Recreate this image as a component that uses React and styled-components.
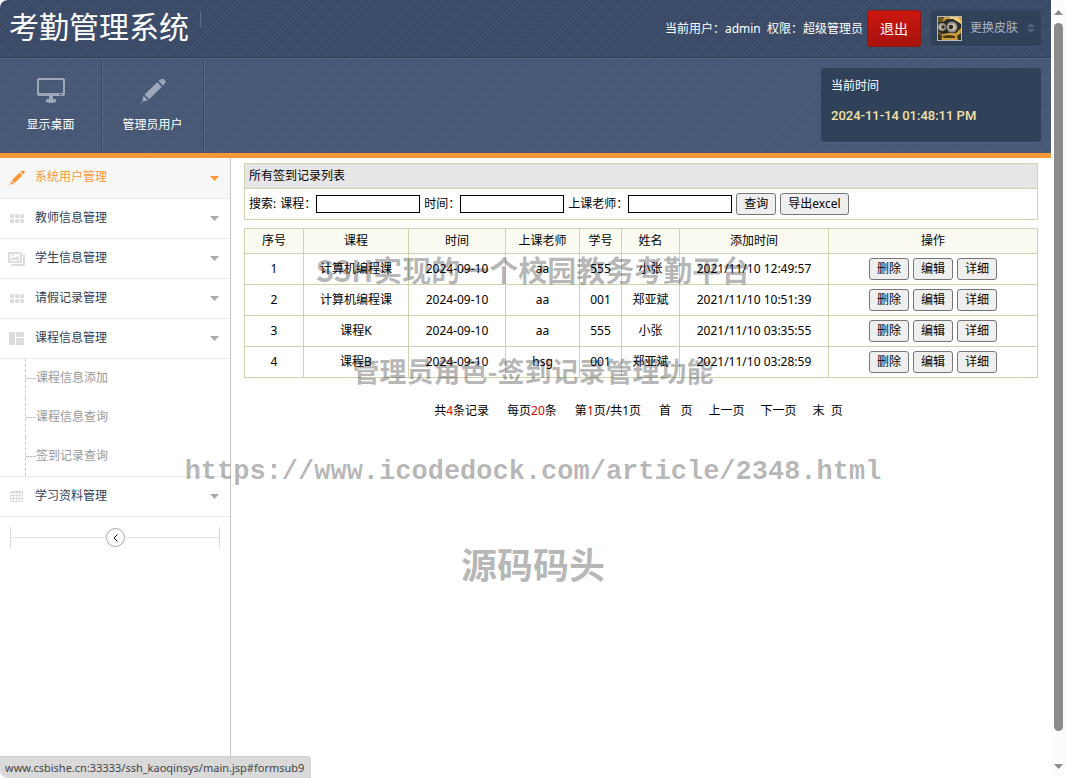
import React from 'react';
import styled, { createGlobalStyle, css } from 'styled-components';

const navy = '#30415a';
const orange = '#f89736';
const line = '#ebebeb';
const olive = '#cdd3ac';

const twill = css`
  background-image: repeating-linear-gradient(
      135deg,
      rgba(255, 255, 255, 0.03) 0 1px,
      transparent 1px 3px
    ),
    repeating-linear-gradient(0deg, rgba(0, 0, 0, 0.04) 0 1px, transparent 1px 2px);
`;

const GlobalStyle = createGlobalStyle`
  * {
    box-sizing: border-box;
  }
  body {
    margin: 0;
    background: #fff;
    color: #000;
    font: 12px/18px 'Noto Sans', 'Noto Sans CJK SC', sans-serif;
  }
  button, input {
    font: inherit;
    color: inherit;
  }
  a {
    color: inherit;
    text-decoration: none;
  }
  svg {
    display: block;
  }
`;

const Page = styled.div`
  position: relative;
  display: grid;
  grid-template-columns: minmax(0, 1fr) 15px;
  min-height: 100vh;
  overflow: hidden;
`;

const Main = styled.div`
  display: flex;
  flex-direction: column;
`;

const TopBar = styled.header`
  display: flex;
  align-items: center;
  height: 58px;
  padding: 0 10px 0 9px;
  border-bottom: 1px solid ${navy};
  border-top-left-radius: 8px;
  background-color: #3b4c69;
  color: #fff;
  ${twill}
`;

const Brand = styled.h1`
  display: flex;
  gap: 11px;
  margin: 0 auto 0 0;
  font-size: 30px;
  font-weight: 400;
  line-height: 52px;
  padding-bottom: 4px;
  &:after {
    content: '';
    width: 1px;
    height: 16px;
    margin-top: 10px;
    background: #5b6c87;
  }
`;

const Logout = styled.button`
  width: 54px;
  height: 37px;
  margin: 0 10px 0 4px;
  padding: 0;
  border: 1px solid #8e1410;
  border-radius: 3px;
  background: linear-gradient(#cb160f, #a8130e);
  font-size: 14px;
`;

const Skin = styled.button`
  display: flex;
  align-items: center;
  width: 110px;
  height: 37px;
  padding: 0 6px;
  border: 0;
  border-bottom: 1px solid #465672;
  border-radius: 3px;
  background: ${navy};
  color: #a9b5c6;
  svg:last-child {
    margin-left: auto;
  }
  span {
    margin-left: 8px;
  }
`;

const Toolbar = styled.div`
  display: flex;
  height: 100px;
  border-top: 1px solid #53647f;
  border-bottom: 5px solid ${orange};
  background-color: #475977;
  color: #fff;
  ${twill}
`;

const Shortcut = styled.a`
  display: flex;
  flex-direction: column;
  align-items: center;
  gap: 12px;
  width: 102px;
  padding-top: 19px;
  border-right: 1px solid #364762;
  box-shadow: 1px 0 #576883;
  svg {
    color: #9ca8ba;
  }
`;

const Clock = styled.div`
  width: 220px;
  height: 75px;
  margin: 9px 10px 0 auto;
  padding: 9px 10px;
  border-bottom: 1px solid #566681;
  border-radius: 3px;
  background: ${navy};
  time {
    display: block;
    margin-top: 12px;
    color: #f5e2a6;
    font: 500 13px/18px Roboto, sans-serif;
  }
`;

const Body = styled.div`
  display: flex;
  flex: 1;
`;

const Sidebar = styled.nav`
  flex: 0 0 231px;
  border-right: 1px solid #c5c5c5;
`;

const MenuItem = styled.a`
  display: flex;
  align-items: center;
  height: ${props => (props.$active ? 41 : 40)}px;
  padding: 0 11px 0 8px;
  border-bottom: 1px solid ${line};
  background: ${props => (props.$active ? '#f7f7f7' : '#fff')};
  color: ${props => (props.$active ? orange : '#30405a')};
  span {
    margin: 0 auto 0 9px;
    padding-bottom: 2px;
  }
  svg:first-child {
    color: ${props => (props.$active ? orange : '#dcdcdc')};
  }
  svg:last-child {
    color: ${props => (props.$active ? orange : '#a9a9a9')};
  }
`;

const SubMenu = styled.div`
  border-bottom: 1px solid ${line};
  a {
    display: flex;
    align-items: center;
    height: 39px;
    margin-left: 25px;
    border-left: 1px dashed #c9c9c9;
    color: #999;
  }
  a:before {
    content: '';
    width: 10px;
    border-top: 1px dashed #c0c0c0;
  }
  span {
    padding-bottom: 2px;
  }
`;

const Collapser = styled.div`
  display: flex;
  align-items: center;
  height: 21px;
  margin: 10px;
  border: solid #dadada;
  border-width: 0 1px;
  &:before,
  &:after {
    content: '';
    flex: 1;
    height: 1px;
    background: #e2e2e2;
  }
  button {
    display: grid;
    place-items: center;
    width: 19px;
    height: 19px;
    padding: 0;
    border: 1px solid #aaa;
    border-radius: 50%;
    background: #fff;
  }
`;

const Content = styled.main`
  flex: 1;
  min-width: 0;
  padding: 5px 13px;
`;

const Panel = styled.section`
  border: 1px solid ${olive};
  h2 {
    margin: 0;
    padding: 3px 4px;
    border-bottom: 1px solid ${olive};
    background: #e6e6e6;
    font-size: 12px;
    font-weight: 400;
    line-height: 18px;
  }
`;

const Search = styled.form`
  display: flex;
  align-items: center;
  gap: 4px;
  height: 30px;
  padding: 0 4px;
  label {
    display: flex;
    align-items: center;
  }
  input {
    width: 104px;
    height: 18px;
    padding: 0 2px;
    border: 1px solid #000;
    background: #fff;
  }
`;

const Button = styled.button`
  height: 22px;
  padding: 0 7px;
  border: 1px solid #767676;
  border-radius: 3px;
  background: #efefef;
  line-height: 18px;
`;

const Table = styled.table`
  width: 100%;
  margin-top: 8px;
  border-collapse: collapse;
  table-layout: fixed;
  text-align: center;
  th,
  td {
    height: 31px;
    padding: 0;
    border: 1px solid ${olive};
    font-weight: 400;
  }
  th {
    height: 25px;
    background: #fafaf0;
  }
`;

const Col = styled.col`
  width: ${props => props.$width};
`;

const Actions = styled.div`
  display: flex;
  justify-content: center;
  gap: 4px;
`;

const Pager = styled.div`
  display: flex;
  justify-content: center;
  gap: 18px;
  margin-top: 24px;
  padding-right: 5px;
  b {
    color: #e00000;
    font-weight: 400;
  }
  a {
    white-space: pre;
  }
  a + a {
    margin-left: -2px;
  }
`;

const Scrollbar = styled.div`
  display: flex;
  flex-direction: column;
  align-items: center;
  justify-content: space-between;
  height: 100vh;
  padding: 10px 0 9px;
  border-radius: 0 8px 8px 0;
  background: #fcfcfc;
  color: #8b8b8b;
  &:before {
    content: '';
    order: 1;
    flex: 1;
    width: 9px;
    margin: 8px 0 33px;
    border-radius: 5px;
    background: #8b8b8b;
  }
  svg:last-child {
    order: 2;
  }
`;

const Watermark = styled.div`
  position: absolute;
  left: 0;
  right: 0;
  top: ${props => props.$top}px;
  color: rgba(0, 0, 0, 0.3);
  font-family: ${props => (props.$mono ? "'Liberation Mono', monospace" : "'Noto Sans CJK SC', sans-serif")};
  font-size: ${props => props.$size}px;
  font-weight: 700;
  line-height: 40px;
  text-align: center;
  pointer-events: none;
  white-space: nowrap;
`;

const StatusBar = styled.div`
  position: absolute;
  left: 0;
  bottom: 0;
  height: 22px;
  padding: 0 6px 0 5px;
  border: 1px solid #d0d0d0;
  border-width: 1px 1px 0 0;
  border-radius: 0 4px 0 8px;
  background: rgba(215, 215, 215, 0.95);
  color: #444;
  font-size: 11px;
  line-height: 22px;
`;

const Pencil = ({ size }) => (
  <svg width={size} height={size} viewBox="0 0 26 26" fill="currentColor">
    <path d="M19.5 2.2Q22 -.6 24.4 1.6Q26.8 4 24.2 6.3L23 7.5L18.4 3Z" />
    <path d="M17.2 4.2L21.8 8.8L9.2 21.2L4.6 16.6Z" />
    <path d="M3.5 17.8L8 22.3L3.4 23.4L2.4 22.4ZM1.5 23.3L2.7 24.5L.6 25.3Z" />
  </svg>
);

const Monitor = () => (
  <svg width="28" height="26" viewBox="0 0 28 26" fill="currentColor">
    <path
      fillRule="evenodd"
      d="M2 0H26Q28 0 28 2V16Q28 18 26 18H16V21H18Q20 22 19 24Q14 26 9 24Q8 22 10 21H12V18H2Q0 18 0 16V2Q0 0 2 0ZM2 2V15H26V2Z"
    />
    <path fill="#475977" d="M22 16h3v1h-3z" />
  </svg>
);

const Grid = () => (
  <svg width="18" height="18" viewBox="0 0 18 18" fill="currentColor">
    {[2, 7, 12].map(x => (
      <React.Fragment key={x}>
        <rect x={x} y="4" width="4" height="4" rx="1" />
        <rect x={x} y="9" width="4" height="4" rx="1" />
      </React.Fragment>
    ))}
  </svg>
);

const Pictures = () => (
  <svg width="18" height="18" viewBox="0 0 18 18" fill="currentColor">
    <path
      fillRule="evenodd"
      d="M1 2H13Q14 2 14 3V12Q14 13 13 13H1Q0 13 0 12V3Q0 2 1 2ZM2 4V11H12V4Z"
    />
    <path d="M3 10V8L5 7L7 8L9 6L11 8V10ZM4 5h2v1H4zM15 4H17V16H3V14H15Z" />
  </svg>
);

const Columns = () => (
  <svg width="18" height="18" viewBox="0 0 18 18" fill="currentColor">
    <rect x="1" y="2" width="6" height="13" rx="1" />
    <rect x="8" y="2" width="8" height="5" rx="1" />
    <rect x="8" y="8" width="8" height="7" rx="1" />
  </svg>
);

const Sheet = () => (
  <svg width="18" height="18" viewBox="0 0 18 18" fill="none" stroke="currentColor">
    <path d="M2.5 3.5H14.5V13.5H2.5ZM2.5 4.5H14.5M2.5 7.5H14.5M2.5 10.5H14.5M5.5 4V13M8.5 4V13M11.5 4V13" />
  </svg>
);

const Caret = ({ up }) => (
  <svg width="9" height="5" viewBox="0 0 9 5" fill="currentColor">
    <path d={up ? 'M0 5L4.5 0L9 5Z' : 'M0 0H9L4.5 5Z'} />
  </svg>
);

const Avatar = () => (
  <svg width="25" height="25" viewBox="0 0 25 25">
    <rect width="25" height="25" fill="#b7b9b8" />
    <path fill="#6b5426" d="M1 1h23v23H1z" />
    <path fill="#c89d3c" d="M7 1h17v23H5V9z" />
    <path fill="#ecd07a" d="M13 1h8l3 4v3H11z" />
    <path fill="#2d2a24" d="M1 6h5l4-3h6l5 3 3 2v4l-5 5-7 0-6 1-5-3z" />
    <circle cx="5" cy="11" r="4" fill="#8d8f8b" />
    <circle cx="15" cy="11" r="5.5" fill="#8d9190" />
    <circle cx="5" cy="11" r="2.6" fill="#c9bfa3" />
    <circle cx="15" cy="11" r="3.6" fill="#cfc7ae" />
    <circle cx="6" cy="11" r="1.8" fill="#36271b" />
    <circle cx="14" cy="11" r="2.2" fill="#36271b" />
    <path fill="#4a3817" d="M5 20l7-1 6 1v2H7z" />
    <path fill="#37331f" d="M1 17l3 3v4H1zM20 20l4-3v7h-3z" />
  </svg>
);

const menu = [
  { label: '系统用户管理', icon: <Pencil size={16} />, active: true },
  { label: '教师信息管理', icon: <Grid /> },
  { label: '学生信息管理', icon: <Pictures /> },
  { label: '请假记录管理', icon: <Grid /> },
  { label: '课程信息管理', icon: <Columns />, children: ['课程信息添加', '课程信息查询', '签到记录查询'] },
  { label: '学习资料管理', icon: <Sheet /> },
];

const columns = [
  ['序号', '59px'],
  ['课程', '105px'],
  ['时间', '97px'],
  ['上课老师', '74px'],
  ['学号', '42px'],
  ['姓名', '58px'],
  ['添加时间', '149px'],
  ['操作', 'auto'],
];

const rows = [
  ['1', '计算机编程课', '2024-09-10', 'aa', '555', '小张', '2021/11/10 12:49:57'],
  ['2', '计算机编程课', '2024-09-10', 'aa', '001', '郑亚斌', '2021/11/10 10:51:39'],
  ['3', '课程K', '2024-09-10', 'aa', '555', '小张', '2021/11/10 03:35:55'],
  ['4', '课程B', '2024-09-10', 'hsg', '001', '郑亚斌', '2021/11/10 03:28:59'],
];

const MenuIcon = styled.i`
  display: grid;
  place-items: center;
  width: 18px;
  height: 18px;
  color: ${props => (props.$active ? orange : '#dcdcdc')};
  svg:first-child {
    color: inherit;
  }
`;

const App = () => (
  <Page>
    <GlobalStyle />
    <Main>
      <TopBar>
        <Brand>考勤管理系统</Brand>
        <span>当前用户：admin&nbsp; 权限：超级管理员</span>
        <Logout type="button">退出</Logout>
        <Skin type="button">
          <Avatar />
          <span>更换皮肤</span>
          <svg width="8" height="10" viewBox="0 0 8 10" fill="#53637d">
            <path d="M0 4L4 0L8 4ZM0 6H8L4 10Z" />
          </svg>
        </Skin>
      </TopBar>
      <Toolbar>
        <Shortcut href="#desktop">
          <Monitor />
          显示桌面
        </Shortcut>
        <Shortcut href="#admin">
          <Pencil size={26} />
          管理员用户
        </Shortcut>
        <Clock>
          当前时间
          <time dateTime="2024-11-14T13:48:11">2024-11-14 01:48:11 PM</time>
        </Clock>
      </Toolbar>
      <Body>
        <Sidebar>
          {menu.map(item => (
            <React.Fragment key={item.label}>
              <MenuItem href="#menu" $active={item.active}>
                <MenuIcon $active={item.active}>{item.icon}</MenuIcon>
                <span>{item.label}</span>
                <Caret />
              </MenuItem>
              {item.children && (
                <SubMenu>
                  {item.children.map(child => (
                    <a href="#formsub9" key={child}>
                      <span>{child}</span>
                    </a>
                  ))}
                </SubMenu>
              )}
            </React.Fragment>
          ))}
          <Collapser>
            <button type="button" aria-label="收起">
              <svg width="5" height="8" viewBox="0 0 5 8" fill="none" stroke="#000">
                <path d="M4.5 .5L1 4L4.5 7.5" />
              </svg>
            </button>
          </Collapser>
        </Sidebar>
        <Content>
          <Panel>
            <h2>所有签到记录列表</h2>
            <Search>
              搜索:
              <label>
                课程：
                <input name="course" />
              </label>
              <label>
                时间：
                <input name="date" />
              </label>
              <label>
                上课老师：
                <input name="teacher" />
              </label>
              <Button type="button">查询</Button>
              <Button type="button">导出excel</Button>
            </Search>
          </Panel>
          <Table>
            <colgroup>
              {columns.map(([name, width]) => (
                <Col key={name} $width={width} />
              ))}
            </colgroup>
            <thead>
              <tr>
                {columns.map(([name]) => (
                  <th key={name}>{name}</th>
                ))}
              </tr>
            </thead>
            <tbody>
              {rows.map(row => (
                <tr key={row[0]}>
                  {row.map((cell, i) => (
                    <td key={columns[i][0]}>{cell}</td>
                  ))}
                  <td>
                    <Actions>
                      <Button type="button">删除</Button>
                      <Button type="button">编辑</Button>
                      <Button type="button">详细</Button>
                    </Actions>
                  </td>
                </tr>
              ))}
            </tbody>
          </Table>
          <Pager>
            <span>共<b>4</b>条记录</span>
            <span>每页<b>20</b>条</span>
            <span>第<b>1</b>页/共1页</span>
            <a href="#first">首{'   '}页</a>
            <a href="#prev">上一页</a>
            <a href="#next">下一页</a>
            <a href="#last">末{'  '}页</a>
          </Pager>
        </Content>
      </Body>
    </Main>
    <Scrollbar>
      <Caret up />
      <Caret />
    </Scrollbar>
    <Watermark $top={249} $size={29}>SSH实现的一个校园教务考勤平台</Watermark>
    <Watermark $top={351} $size={27}>管理员角色-签到记录管理功能</Watermark>
    <Watermark $top={452} $size={27} $mono>https://www.icodedock.com/article/2348.html</Watermark>
    <Watermark $top={543} $size={36}>源码码头</Watermark>
    <StatusBar>www.csbishe.cn:33333/ssh_kaoqinsys/main.jsp#formsub9</StatusBar>
  </Page>
);

export default App;
